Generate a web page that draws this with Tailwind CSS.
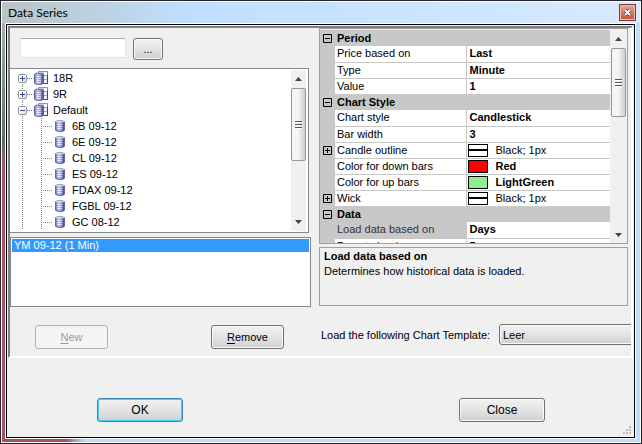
<!DOCTYPE html>
<html lang="en">
<head>
  <meta charset="UTF-8">
  <meta name="viewport" content="width=device-width, initial-scale=1.0">
  <title>Data Series</title>
  <script src="https://cdn.jsdelivr.net/npm/@tailwindcss/browser@4"></script>
</head>
<body class="bg-[#24242f] font-['Liberation_Sans',Arial,sans-serif] text-[11px] leading-[16px] text-black">
  <!-- Shared icons -->
  <svg class="absolute size-0">
    <defs>
      <linearGradient id="cyl" x1="0" x2="1">
        <stop offset="0" stop-color="#6f72b4"/>
        <stop offset="0.35" stop-color="#c3c7f0"/>
        <stop offset="0.7" stop-color="#8487ca"/>
        <stop offset="1" stop-color="#3f4187"/>
      </linearGradient>
      <linearGradient id="box" x1="0" y1="0" x2="1" y2="1">
        <stop offset="0.4" stop-color="#fff"/>
        <stop offset="1" stop-color="#d4d4d4"/>
      </linearGradient>
    </defs>
    <symbol id="db" viewBox="0 0 10 12">
      <path d="M.5 2Q.5.5 5 .5T9.500 2V10Q9.500 11.500 5 11.500T.5 10Z" fill="url(#cyl)" stroke="#55578f" stroke-width=".8"/>
      <ellipse cx="5" cy="1.600" rx="3.800" ry="1" fill="#d3d5ee"/>
      <path d="M2.500 4.500H7M2.500 6.500H7M2.500 8.500H7" stroke="#f0f1ff" stroke-width=".8"/>
    </symbol>
    <symbol id="dbs" viewBox="0 0 14 14">
      <path d="M4.500.5H13.500V12.500H4.500Z" fill="#eef2fa" stroke="#8c94a8"/>
      <path d="M9 .5V12M4 4.500H13M10 8.500H13" stroke="#8c94a8" stroke-width=".8"/>
      <path d="M13.500 4V12.500H10" fill="none" stroke="#44465c"/>
      <path d="M.5 3.500Q.5 2 5 2T9.500 3.500V12Q9.500 13.500 5 13.500T.5 12Z" fill="url(#cyl)" stroke="#55578f" stroke-width=".8"/>
      <path d="M2.500 5.500H7M2.500 7.500H7M2.500 9.500H7M2.500 11.500H7" stroke="#f0f1ff" stroke-width=".8"/>
    </symbol>
    <symbol id="exp" viewBox="0 0 9 9">
      <rect x=".5" y=".5" width="8" height="8" rx="1" fill="url(#box)" stroke="#919191"/>
      <path d="M2 4.500H7" stroke="#2f4a9c"/>
    </symbol>
    <symbol id="root" viewBox="0 0 41 16">
      <path d="M17 8.500H24" stroke="#808080" stroke-dasharray="1 1"/>
      <use href="#exp" x="8" y="4" width="9" height="9"/>
      <use href="#dbs" x="24" y="1" width="14" height="14"/>
    </symbol>
    <symbol id="leaf" viewBox="0 0 60 16">
      <path d="M12.500 0V16M31.500 0V16M31 8.500H43" stroke="#808080" stroke-dasharray="1 1"/>
      <use href="#db" x="45" y="2" width="10" height="12"/>
    </symbol>
    <symbol id="plus" viewBox="0 0 9 9"><path d="M.5.5H8.500V8.500H.5ZM2 4.500H7M4.500 2V7" fill="none" stroke="#000"/></symbol>
    <symbol id="minus" viewBox="0 0 9 9"><path d="M.5.5H8.500V8.500H.5ZM2 4.500H7" fill="none" stroke="#000"/></symbol>
    <symbol id="up" viewBox="0 0 7 4"><path d="M0 4L3.500 0L7 4Z" fill="#444"/></symbol>
    <symbol id="down" viewBox="0 0 7 4"><path d="M0 0L3.500 4L7 0Z" fill="#444"/></symbol>
    <symbol id="grab" viewBox="0 0 7 8"><path d="M0 .5H7M0 3.500H7M0 6.500H7" stroke="#555"/><path d="M0 1.500H7M0 4.500H7M0 7.500H7" stroke="#fff"/></symbol>
  </svg>

  <div class="h-screen min-h-[444px] p-px">
    <div class="flex h-full flex-col border border-white bg-[#bfdcfb]">
      <!-- Title bar -->
      <header class="flex h-[21px] shrink-0 items-center justify-between bg-linear-to-r from-[#b9c4c4] via-[#c0dfff] via-30% to-[#d8eafc] pr-1 pl-[6px]">
        <h1 class="font-[Lato,'Open_Sans',sans-serif] text-[12px] leading-[20px]">Data Series</h1>
        <button type="button" aria-label="Close window" class="flex h-[17px] w-[17px] items-center justify-center border border-[#7a3a36] bg-linear-to-b from-[#eba99b] via-[#d9755f] to-[#c9523a] shadow-[inset_0_0_0_1px_#f3b9ad]">
          <svg class="size-[9px]" viewBox="0 0 9 9"><path d="M2 2L7 7M7 2L2 7" stroke="#4b4f63" stroke-width="3.400"/><path d="M2 2L7 7M7 2L2 7" stroke="#fff" stroke-width="1.800"/></svg>
        </button>
      </header>

      <!-- Frame -->
      <div class="flex min-h-0 flex-1">
        <div class="w-[3px] shrink-0 bg-linear-to-b from-[#a4b0ae] from-0% via-[#5f6c68] via-28% to-[#a84f60] to-36%"></div>
        <main class="mr-1 flex min-w-0 flex-1 flex-col border border-white bg-black p-px">
          <div class="relative flex min-h-0 flex-1 flex-col bg-[#f0f0f0] pt-px">
            <section class="mr-px ml-px flex h-[332px] shrink-0 border-2 border-t-[#808080] border-r-white border-b-white border-l-[#808080]">
              <!-- Instruments -->
              <div class="flex w-[303px] shrink-0 flex-col">
                <div class="flex h-[40px] shrink-0 gap-[7px] pt-[10px] pl-[10px]">
                  <input type="text" aria-label="Instrument" class="h-[20px] w-[106px] rounded-[2px] border border-[#dfe3eb] border-t-[#abadb3] bg-white px-1 outline-none">
                  <button type="button" class="h-[22px] w-[30px] rounded-[3px] border border-[#707070] bg-linear-to-b from-[#f2f2f2] via-[#e4e4e4] to-[#cfcfcf] shadow-[inset_0_0_0_1px_#fafafa]">...</button>
                </div>

                <div class="mr-1 flex h-[165px] shrink-0 justify-between border border-l-0 border-[#828790] bg-white py-px pr-0.5">
                  <ul>
                    <li class="flex"><svg class="h-4 w-[43px]" viewBox="0 0 43 16"><path d="M12.500 8V16" stroke="#808080" stroke-dasharray="1 1"/><use href="#root" width="41" height="16"/><path d="M12.500 6V11" stroke="#2f4a9c"/></svg>18R</li>
                    <li class="flex"><svg class="h-4 w-[43px]" viewBox="0 0 43 16"><path d="M12.500 0V16" stroke="#808080" stroke-dasharray="1 1"/><use href="#root" width="41" height="16"/><path d="M12.500 6V11" stroke="#2f4a9c"/></svg>9R</li>
                    <li>
                      <div class="flex"><svg class="h-4 w-[43px]" viewBox="0 0 43 16"><path d="M12.500 0V16" stroke="#808080" stroke-dasharray="1 1"/><use href="#root" width="41" height="16"/></svg>Default</div>
                      <ul>
                        <li class="flex"><svg class="h-4 w-[62px]" viewBox="0 0 62 16"><use href="#leaf" width="60" height="16"/></svg>6B 09-12</li>
                        <li class="flex"><svg class="h-4 w-[62px]" viewBox="0 0 62 16"><use href="#leaf" width="60" height="16"/></svg>6E 09-12</li>
                        <li class="flex"><svg class="h-4 w-[62px]" viewBox="0 0 62 16"><use href="#leaf" width="60" height="16"/></svg>CL 09-12</li>
                        <li class="flex"><svg class="h-4 w-[62px]" viewBox="0 0 62 16"><use href="#leaf" width="60" height="16"/></svg>ES 09-12</li>
                        <li class="flex"><svg class="h-4 w-[62px]" viewBox="0 0 62 16"><use href="#leaf" width="60" height="16"/></svg>FDAX 09-12</li>
                        <li class="flex"><svg class="h-4 w-[62px]" viewBox="0 0 62 16"><use href="#leaf" width="60" height="16"/></svg>FGBL 09-12</li>
                        <li class="flex"><svg class="h-4 w-[62px]" viewBox="0 0 62 16"><use href="#leaf" width="60" height="16"/></svg>GC 08-12</li>
                      </ul>
                    </li>
                  </ul>
                  <div class="flex w-[15px] flex-col items-center bg-[#f0f0f0]">
                    <svg class="my-[7px] h-1 w-[7px] shrink-0"><use href="#up"/></svg>
                    <div class="flex h-[73px] w-full items-center justify-center rounded-[2px] border border-[#979797] bg-linear-to-r from-[#f5f5f5] from-45% to-[#cfcfcf]"><svg class="h-2 w-[7px]"><use href="#grab"/></svg></div>
                    <svg class="mt-auto mb-[7px] h-1 w-[7px] shrink-0"><use href="#down"/></svg>
                  </div>
                </div>

                <ul class="mt-1 mr-[2px] h-[70px] shrink-0 border border-[#828790] bg-white p-px">
                  <li class="bg-[#3399ff] pl-[2px] leading-[13px] text-white">YM 09-12 (1 Min)</li>
                </ul>

                <div class="mt-[18px] flex justify-between pr-[29px] pl-[25px]">
                  <button type="button" disabled class="h-[24px] w-[73px] rounded-[3px] border border-[#adb2b5] bg-[#f4f4f4] text-[#9a9a9a]"><span class="underline underline-offset-2">N</span>ew</button>
                  <button type="button" class="h-[24px] w-[73px] rounded-[3px] border border-[#707070] bg-linear-to-b from-[#f2f2f2] via-[#e4e4e4] to-[#cfcfcf] shadow-[inset_0_0_0_1px_#fafafa]"><span class="underline underline-offset-2">R</span>emove</button>
                </div>
              </div>

              <!-- Properties -->
              <div class="flex min-w-0 flex-1 flex-col overflow-hidden pl-[6px]">
                <div class="mr-[3px] flex h-[216px] shrink-0 overflow-hidden border border-[#a0a0a0] bg-[#f0f0f0] pt-px pr-px">
                  <table class="h-[224px] flex-1 table-fixed border-collapse bg-[#c8c8c8]">
                    <colgroup><col class="w-[15px]"><col class="w-[131px]"><col></colgroup>
                    <tbody>
                      <tr class="h-4"><td class="p-0"><svg class="mx-[3px] size-[9px]"><use href="#minus"/></svg></td><th colspan="2" class="p-0 pl-[2px] text-left leading-[15px]">Period</th></tr>
                      <tr class="h-4"><td class="p-0"></td><td class="border-r border-b border-[#c8c8c8] bg-white p-0 pl-[2px] leading-[15px]">Price based on</td><td class="border-b border-[#c8c8c8] bg-white p-0 pl-[3px] leading-[15px] font-bold">Last</td></tr>
                      <tr class="h-4"><td class="p-0"></td><td class="border-r border-b border-[#c8c8c8] bg-white p-0 pl-[2px] leading-[15px]">Type</td><td class="border-b border-[#c8c8c8] bg-white p-0 pl-[3px] leading-[15px] font-bold">Minute</td></tr>
                      <tr class="h-4"><td class="p-0"></td><td class="border-r border-b border-[#c8c8c8] bg-white p-0 pl-[2px] leading-[15px]">Value</td><td class="border-b border-[#c8c8c8] bg-white p-0 pl-[3px] leading-[15px] font-bold">1</td></tr>
                      <tr class="h-4"><td class="p-0"><svg class="mx-[3px] size-[9px]"><use href="#minus"/></svg></td><th colspan="2" class="p-0 pl-[2px] text-left leading-[15px]">Chart Style</th></tr>
                      <tr class="h-4"><td class="p-0"></td><td class="border-r border-b border-[#c8c8c8] bg-white p-0 pl-[2px] leading-[15px]">Chart style</td><td class="border-b border-[#c8c8c8] bg-white p-0 pl-[3px] leading-[15px] font-bold">Candlestick</td></tr>
                      <tr class="h-4"><td class="p-0"></td><td class="border-r border-b border-[#c8c8c8] bg-white p-0 pl-[2px] leading-[15px]">Bar width</td><td class="border-b border-[#c8c8c8] bg-white p-0 pl-[3px] leading-[15px] font-bold">3</td></tr>
                      <tr class="h-4"><td class="p-0"><svg class="mx-[3px] size-[9px]"><use href="#plus"/></svg></td><td class="border-r border-b border-[#c8c8c8] bg-white p-0 pl-[2px] leading-[15px]">Candle outline</td><td class="border-b border-[#c8c8c8] bg-white p-0 pl-px leading-[15px]"><div class="flex items-center gap-2"><span class="flex h-[13px] w-5 items-center border border-black"><i class="h-0.5 w-full bg-black"></i></span>Black; 1px</div></td></tr>
                      <tr class="h-4"><td class="p-0"></td><td class="border-r border-b border-[#c8c8c8] bg-white p-0 pl-[2px] leading-[15px]">Color for down bars</td><td class="border-b border-[#c8c8c8] bg-white p-0 pl-px leading-[15px] font-bold"><div class="flex items-center gap-2"><span class="h-[13px] w-5 border border-black bg-[#ff0000]"></span>Red</div></td></tr>
                      <tr class="h-4"><td class="p-0"></td><td class="border-r border-b border-[#c8c8c8] bg-white p-0 pl-[2px] leading-[15px]">Color for up bars</td><td class="border-b border-[#c8c8c8] bg-white p-0 pl-px leading-[15px] font-bold"><div class="flex items-center gap-2"><span class="h-[13px] w-5 border border-black bg-[#90ee90]"></span>LightGreen</div></td></tr>
                      <tr class="h-4"><td class="p-0"><svg class="mx-[3px] size-[9px]"><use href="#plus"/></svg></td><td class="border-r border-b border-[#c8c8c8] bg-white p-0 pl-[2px] leading-[15px]">Wick</td><td class="border-b border-[#c8c8c8] bg-white p-0 pl-px leading-[15px]"><div class="flex items-center gap-2"><span class="flex h-[13px] w-5 items-center border border-black"><i class="h-0.5 w-full bg-black"></i></span>Black; 1px</div></td></tr>
                      <tr class="h-4"><td class="p-0"><svg class="mx-[3px] size-[9px]"><use href="#minus"/></svg></td><th colspan="2" class="p-0 pl-[2px] text-left leading-[15px]">Data</th></tr>
                      <tr class="h-4"><td class="p-0"></td><td class="border-r border-b border-[#c8c8c8] p-0 pl-[2px] leading-[15px] text-[#333]">Load data based on</td><td class="border-b border-[#c8c8c8] bg-white p-0 pl-[3px] leading-[15px] font-bold">Days</td></tr>
                      <tr class="h-4"><td class="p-0"></td><td class="border-r border-b border-[#c8c8c8] bg-white p-0 pl-[2px] leading-[15px]">Days to load</td><td class="border-b border-[#c8c8c8] bg-white p-0 pl-[3px] leading-[15px] font-bold">5</td></tr>
                    </tbody>
                  </table>
                  <div class="ml-px flex w-[15px] shrink-0 flex-col items-center">
                    <svg class="my-[7px] h-1 w-[7px] shrink-0"><use href="#up"/></svg>
                    <div class="flex h-[69px] w-full items-center justify-center rounded-[2px] border border-[#979797] bg-linear-to-r from-[#f5f5f5] from-45% to-[#cfcfcf]"><svg class="h-2 w-[7px]"><use href="#grab"/></svg></div>
                    <svg class="mt-auto mb-[6px] h-1 w-[7px] shrink-0"><use href="#down"/></svg>
                  </div>
                </div>

                <div class="mt-[3px] mr-[3px] h-[59px] shrink-0 border border-[#a0a0a0] pt-px pl-1 leading-[15px]">
                  <h2 class="font-bold">Load data based on</h2>
                  <p>Determines how historical data is loaded.</p>
                </div>

                <div class="mt-[18px] -mr-2 flex items-center pl-[2px]">
                  <label for="template" class="w-[178px] shrink-0 whitespace-nowrap">Load the following Chart Template:</label>
                  <select id="template" class="h-[21px] min-w-0 flex-1 appearance-none rounded-[3px] border border-[#707070] bg-linear-to-b from-[#f2f2f2] via-[#e4e4e4] to-[#cfcfcf] pl-[3px] shadow-[inset_0_0_0_1px_#fafafa]">
                    <option>Leer</option>
                  </select>
                </div>
              </div>
            </section>

            <!-- Dialog buttons -->
            <footer class="mt-[40px] flex justify-between pr-[89px] pl-[90px]">
              <button type="submit" class="h-[24px] w-[86px] rounded-[3px] border border-[#3c7fb1] bg-linear-to-b from-[#f2f2f2] via-[#e4e4e4] to-[#cfcfcf] text-[12px] shadow-[inset_0_0_0_1px_#48d0f8]">OK</button>
              <button type="button" class="h-[24px] w-[86px] rounded-[3px] border border-[#707070] bg-linear-to-b from-[#f2f2f2] via-[#e4e4e4] to-[#cfcfcf] text-[12px] shadow-[inset_0_0_0_1px_#fafafa]">Close</button>
            </footer>
            <svg class="absolute right-[3px] bottom-[3px] size-[8px]" viewBox="0 0 8 8"><path d="M6 0H8V2H6ZM6 3H8V5H6ZM3 3H5V5H3ZM6 6H8V8H6ZM3 6H5V8H3ZM0 6H2V8H0Z" fill="#bdbdbd"/></svg>
          </div>
        </main>
      </div>
      <div class="h-[3px] shrink-0 bg-linear-to-r from-[#a84f60] from-10% to-[#bfdcfb] to-13%"></div>
    </div>
  </div>
</body>
</html>
